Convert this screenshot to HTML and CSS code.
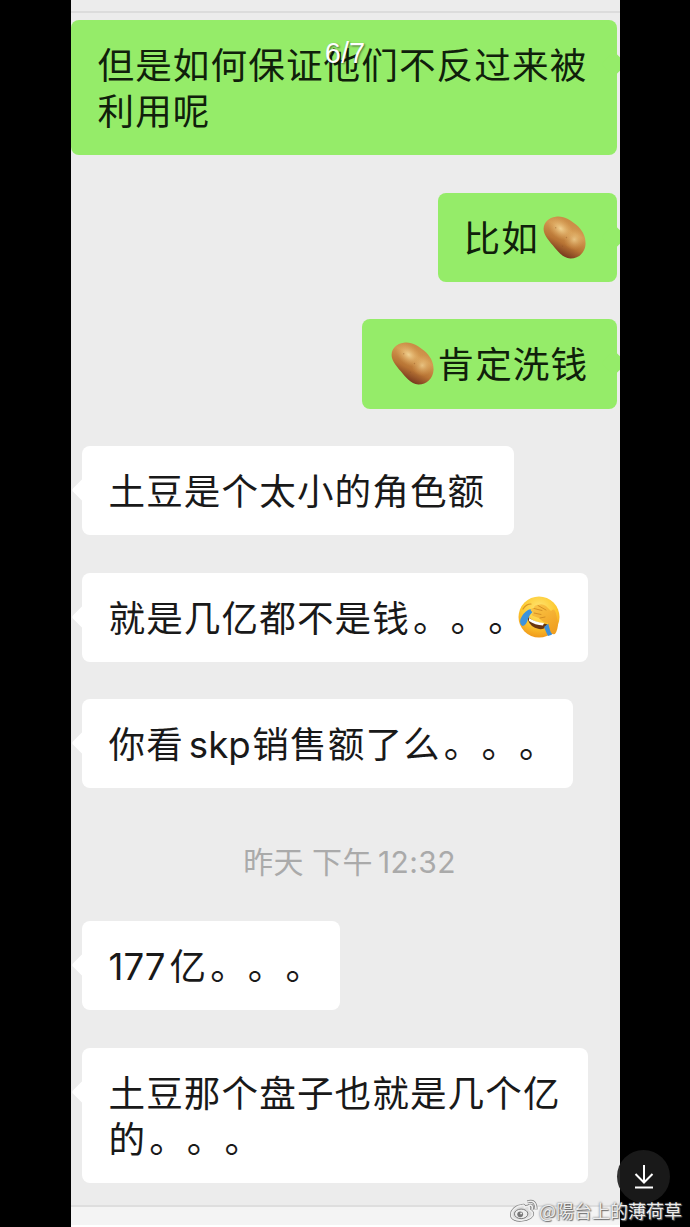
FILE: index.html
```
<!DOCTYPE html>
<html lang="zh-CN">
<head>
<meta charset="utf-8">
<title>6/7</title>
<link rel="stylesheet" href="styles.css">
</head>
<body>
<svg width="0" height="0" class="defs" aria-hidden="true">
  <defs>
    <linearGradient id="skin" x1="0.7" y1="0.1" x2="0.3" y2="0.9">
      <stop offset="0" stop-color="#c98a45"/><stop offset="0.3" stop-color="#d39a52"/><stop offset="0.65" stop-color="#b87434"/><stop offset="1" stop-color="#6f311b"/>
    </linearGradient>
    <radialGradient id="shine"><stop offset="0" stop-color="#f8e0a2"/><stop offset="1" stop-color="#e5ad60" stop-opacity="0"/></radialGradient>
    <radialGradient id="face" cx="0.5" cy="0.3" r="0.7">
      <stop offset="0" stop-color="#ffe676"/><stop offset="0.6" stop-color="#fdc92f"/><stop offset="1" stop-color="#f09a1c"/>
    </radialGradient>
    <linearGradient id="hand" x1="0" y1="0" x2="0.6" y2="1"><stop offset="0" stop-color="#fbc748"/><stop offset="1" stop-color="#f0a022"/></linearGradient>
    <symbol id="potato" viewBox="0 0 44 44">
      <path d="M13 .8C21-.5 28 4 34 9C40 14 44 21 43.500 29C43 38 36 43.700 28 43.500C20 43 15 36 10 30C5 24 .6 19 .6 13C1 6 6 1.800 13 .8Z" fill="url(#skin)"/>
      <ellipse cx="18" cy="13" rx="15" ry="10" transform="rotate(40 18 13)" fill="url(#shine)" opacity=".8"/>
      <ellipse cx="32" cy="24" rx="11" ry="11" fill="url(#shine)" opacity=".65"/>
      <g fill="#8e5426" opacity=".4"><circle cx="13" cy="12" r=".7"/><circle cx="24" cy="22" r=".7"/><circle cx="20" cy="31" r=".7"/></g>
    </symbol>
  </defs>
</svg>
<main class="viewer">
  <section class="chat">
    <div class="topline"></div>
    <div class="bubble out w-full">但是如何保证他们不反过来被<br>利用呢</div>
    <div class="bubble out w-179">比如<svg class="potato after"><use href="#potato"/></svg></div>
    <div class="bubble out w-255"><svg class="potato before"><use href="#potato"/></svg>肯定洗钱</div>
    <div class="bubble in w-432">土豆是个太小的角色额</div>
    <div class="bubble in w-506">就是几亿都不是钱<span class="dots">。。。</span><svg class="laugh" viewBox="0 0 42 42">
      <circle cx="21" cy="21" r="20.500" fill="url(#face)"/>
      <path d="M5 13Q8 8 13 8" fill="none" stroke="#d99222" stroke-width="1.200" stroke-linecap="round"/>
      <path d="M10 21Q19 28 29 28Q28 34 21 33Q12 31 10 24Z" fill="#6a3510"/>
      <path d="M11 22Q18 26.500 26 27L25 29.500Q17 29 11 25Z" fill="#fff"/>
      <path d="M10 14Q14 12 14.500 16Q12 18 10 23Q8 30 4.500 30Q1 28 2.500 23Q5 17 10 14Z" fill="#3d93dc"/>
      <path d="M26 31Q28 36 30 40Q34 39 37 36L31 27Z" fill="#3d8fd8"/>
      <path d="M13 15Q12 12 16 12Q16 9 20 9Q24 7 28 10L33 15Q36 11 38 17L40 27Q40 34 37 38Q33 39 32 34L30 27Q25 27 21 22L15 20Q12 18 16 17Z" fill="url(#hand)"/>
      <path d="M16 12.500L24 14.500M20 9.500L28 14M16 17L23 18.500M22 22L27 21" fill="none" stroke="#d18b22" stroke-width=".9" stroke-linecap="round"/>
    </svg></div>
    <div class="bubble in w-491">你看<span class="latin skp">skp</span>销售额了么<span class="dots">。。。</span></div>
    <div class="time">昨天 <span class="noon">下午</span><span class="clock">12:32</span></div>
    <div class="bubble in w-258"><span class="latin num">177</span>亿<span class="dots">。。。</span></div>
    <div class="bubble in w-506">土豆那个盘子也就是几个亿<br>的<span class="dots">。。。</span></div>
    <div class="inputbar"></div>
  </section>
  <div class="counter">6/7</div>
  <div class="download"><svg viewBox="0 0 20 25"><path d="M10 1V18M1.500 10L10 18.500L18.500 10M1 23.500H19" fill="none" stroke="#fff" stroke-width="2"/></svg></div>
  <div class="watermark">
    <svg class="weibo" viewBox="0 0 30 24"><g fill="none" stroke="#777" stroke-width="3.200"><path d="M12 7C7 7 1 12 1.500 17C2 21 7 22.500 12 22C19 21.500 25 18 23 14C22 12 20 12 20 11C21 7 18 7 15 8.500C15 6.500 14 6 12 7Z"/><path d="M18 3Q27 0 27 11M19 7Q24 5 23 11"/></g><g fill="none" stroke="#eee" stroke-width="1.800"><path d="M12 7C7 7 1 12 1.500 17C2 21 7 22.500 12 22C19 21.500 25 18 23 14C22 12 20 12 20 11C21 7 18 7 15 8.500C15 6.500 14 6 12 7Z" fill="#ddd"/><path d="M18 3Q27 0 27 11M19 7Q24 5 23 11"/></g><ellipse cx="11.500" cy="15.500" rx="7" ry="5" fill="#eee" stroke="#777"/><circle cx="10.500" cy="16" r="3" fill="#777"/><circle cx="11.500" cy="15" r="1" fill="#eee"/></svg>
    <span>@陽台上的薄荷草</span>
  </div>
</main>
</body>
</html>
```
FILE: styles.css
```
* { box-sizing: border-box; }
body { margin: 0; background: #000; }
.defs { position: absolute; }
.viewer {
  position: relative;
  width: 690px;
  height: 1227px;
  overflow: hidden;
  background: #000;
  font-family: "Noto Sans CJK SC", sans-serif;
  text-spacing-trim: space-all;
}
.chat {
  display: flex;
  flex-direction: column;
  width: 549px;
  height: 1227px;
  margin-left: 71px;
  background: #ececec;
  overflow: hidden;
}
.topline { flex: none; height: 13px; margin-bottom: 7.3px; border-bottom: 2px solid #dcdcdc; }
.bubble {
  position: relative;
  flex: none;
  height: 89.2px;
  margin-bottom: 37.4px;
  padding: 21px 0 0 26.5px;
  border-radius: 8px;
  font-size: 36.6px;
  line-height: 46px;
  letter-spacing: 1.1px;
  white-space: nowrap;
  color: #191919;
}
.bubble:has(br) { height: 135.2px; }
.out { align-self: flex-end; margin-right: 3px; background: #95ec69; color: #10200b; }
.in { align-self: flex-start; margin-left: 11px; background: #fff; }
.bubble::after {
  content: "";
  position: absolute;
  top: 35px;
  width: 18px;
  height: 18px;
  background: inherit;
  border-radius: 3px;
  transform: rotate(45deg);
}
.out::after { right: -6px; }
.in::after { left: -7px; }
.w-full { width: 546px; }
.w-179 { width: 179px; padding-left: 25.5px; }
.w-255 { width: 255px; }
.w-432 { width: 432px; }
.w-506 { width: 506px; }
.w-491 { width: 491px; }
.w-258 { width: 258px; }
.potato { width: 43px; height: 43px; vertical-align: top; margin-top: 2px; }
.after { margin-left: 4px; }
.before { margin-left: 2px; margin-right: 4px; }
.dots { margin-left: 3px; }
.laugh { width: 42px; height: 42px; vertical-align: top; margin: 2px 0 0 -8px; }
.latin { display: inline-block; font-family: Inter, sans-serif; letter-spacing: 0; line-height: 36px; }
.skp { width: 68.5px; padding-left: 5px; }
.num { width: 61px; }
.time {
  flex: none;
  height: 95.4px;
  padding: 14px 0 0 8px;
  text-align: center;
  font-size: 30px;
  line-height: 40px;
  letter-spacing: .4px;
  color: #aaa;
  white-space: nowrap;
}
.noon { margin-left: 1px; }
.clock { margin-left: 5px; font-family: Inter, sans-serif; font-size: 30px; line-height: 30px; letter-spacing: .4px; }
.inputbar { flex: none; height: 22px; margin-top: -15px; border-top: 2px solid #dedede; border-bottom: 2px solid #fff; background: #f4f4f4; }
.counter {
  position: absolute;
  left: 0;
  right: 0;
  top: 36px;
  text-align: center;
  font: 29px/34px "Liberation Sans", sans-serif;
  color: #fff;
  text-shadow: 1px 1px 2px rgba(0, 0, 0, .55);
}
.download {
  position: absolute;
  left: 617px;
  top: 1150px;
  display: flex;
  align-items: center;
  justify-content: center;
  width: 53px;
  height: 53px;
  border-radius: 50%;
  background: rgba(28, 28, 28, .9);
}
.download svg { width: 20px; height: 25px; }
.watermark {
  position: absolute;
  left: 510px;
  top: 1197px;
  display: flex;
  align-items: center;
  height: 26px;
  font-size: 18px;
  line-height: 26px;
  color: #eee;
  white-space: nowrap;
  text-shadow: 0 0 2px #555, 1px 1px 1px #777;
}
.weibo { width: 29px; height: 23px; }
```
